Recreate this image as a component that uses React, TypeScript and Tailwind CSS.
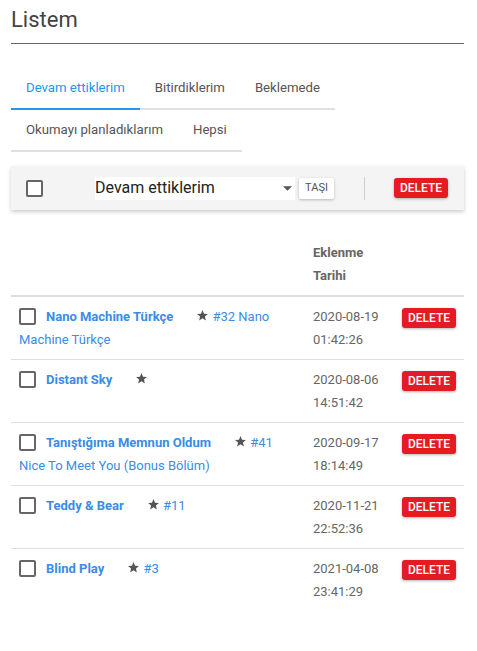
import React from 'react';

interface Entry {
  title: string;
  chapter?: string;
  date: string;
  time: string;
}

const entries: Entry[] = [
  { title: 'Nano Machine Türkçe', chapter: '#32 Nano Machine Türkçe', date: '2020-08-19', time: '01:42:26' },
  { title: 'Distant Sky', date: '2020-08-06', time: '14:51:42' },
  { title: 'Tanıştığıma Memnun Oldum', chapter: '#41 Nice To Meet You (Bonus Bölüm)', date: '2020-09-17', time: '18:14:49' },
  { title: 'Teddy & Bear', chapter: '#11', date: '2020-11-21', time: '22:52:36' },
  { title: 'Blind Play', chapter: '#3', date: '2021-04-08', time: '23:41:29' },
];

const tabs = ['Devam ettiklerim', 'Bitirdiklerim', 'Beklemede', 'Okumayı planladıklarım', 'Hepsi'];

const Checkbox = ({ className = '' }: { className?: string }) => (
  <span className={`inline-block w-[17px] h-[17px] border-2 border-[#666] rounded-[2px] bg-white ${className}`} />
);

const DeleteButton = () => (
  <button className="h-[20px] px-[6px] bg-[#e41b23] text-white text-[12px] leading-[20px] font-medium rounded-[3px] shadow-[0_1px_3px_rgba(0,0,0,0.3)]">
    DELETE
  </button>
);

const Star = () => (
  <svg viewBox="0 0 24 24" className="inline-block w-[13px] h-[13px] align-[-1px] fill-[#555]">
    <path d="M12 17.27L18.18 21l-1.64-7.03L22 9.24l-7.19-.61L12 2 9.19 8.63 2 9.24l5.46 4.73L5.82 21z" />
  </svg>
);

export default function App() {
  return (
    <div className="w-[477px] min-h-[651px] bg-white font-['Roboto',sans-serif]">
      <div className="ml-[11px] w-[453px]">
        {/* başlık */}
        <div className="pt-[6px] h-[44px] border-b border-[#666]">
          <h1 className="text-[22px] leading-[28px] text-[#444]">Listem</h1>
        </div>

        {/* sekmeler */}
        <div className="mt-[24px] flex flex-wrap w-[345px]">
          {tabs.map((tab, i) => (
            <div
              key={tab}
              className={`h-[42px] px-[15px] flex items-center text-[13.2px] border-b-2 ${
                i === 0 ? 'border-[#2196f3] text-[#2196f3]' : 'border-[#e0e0e0] text-[#555]'
              }`}
            >
              {tab}
            </div>
          ))}
        </div>

        {/* araç çubuğu */}
        <div className="mt-[14px] h-[44px] bg-[#f4f4f4] shadow-[0_2px_4px_rgba(0,0,0,0.2)] flex items-center">
          <Checkbox className="ml-[15px] bg-transparent" />
          <div className="ml-[52px] w-[200px] h-[23px] bg-white flex items-center justify-between pr-[3px]">
            <span className="text-[16px] text-[#222]">Devam ettiklerim</span>
            <svg viewBox="0 0 10 5" className="w-[9px] h-[5px] fill-[#555]">
              <path d="M0 0h10L5 5z" />
            </svg>
          </div>
          <button className="ml-[4px] w-[35px] h-[21px] bg-white text-[11px] text-[#555] rounded-[2px] shadow-[0_1px_3px_rgba(0,0,0,0.25)]">
            TAŞI
          </button>
          <div className="ml-[30px] w-px h-[23px] bg-[#ccc]" />
          <div className="ml-[29px] -mt-[2px]">
            <DeleteButton />
          </div>
        </div>

        {/* tablo */}
        <div className="mt-[20px]">
          <div className="grid grid-cols-[294px_89px_70px] border-b-2 border-[#ddd]">
            <div />
            <div className="pl-[8px] pt-[11px] pb-[8px] text-[13px] leading-[23px] font-bold text-[#666]">
              Eklenme Tarihi
            </div>
            <div />
          </div>
          {entries.map((e, i) => (
            <div
              key={e.title}
              className={`grid grid-cols-[294px_89px_70px] ${i < entries.length - 1 ? 'border-b border-[#ddd]' : ''}`}
            >
              <div className="pl-[8px] pr-[16px] pt-[8px] pb-[8px] text-[13px] leading-[23px]">
                <Checkbox className="align-[-4px] mr-[10px]" />
                <span className="font-bold text-[#3a8ce6] mr-[23px]">{e.title}</span>
                <Star />
                {e.chapter && <span className="text-[#3a8ce6]"> {e.chapter}</span>}
              </div>
              <div className="pl-[8px] pt-[8px] pb-[8px] text-[13px] leading-[23px] text-[#666]">
                <div>{e.date}</div>
                <div>{e.time}</div>
              </div>
              <div className="pl-[8px] pt-[8px]">
                <DeleteButton />
              </div>
            </div>
          ))}
        </div>
      </div>
    </div>
  );
}
